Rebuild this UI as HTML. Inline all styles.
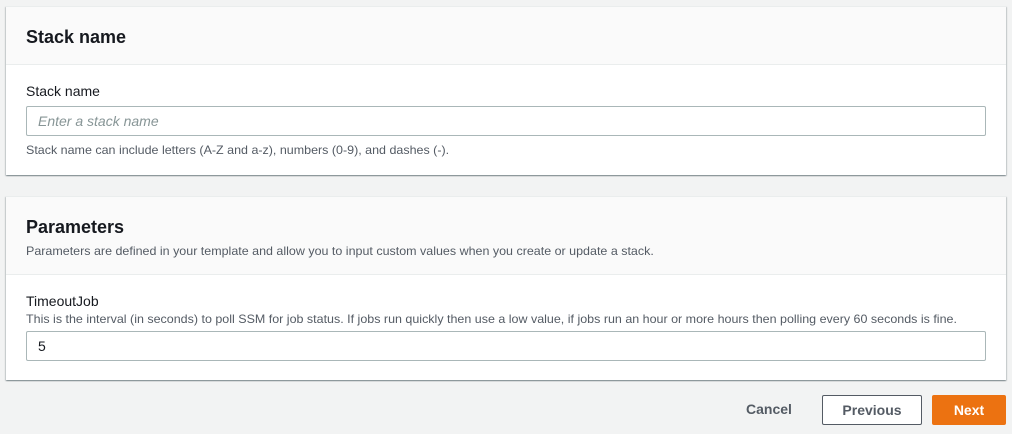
<!DOCTYPE html>
<html><head><style>
body{margin:0;width:1012px;height:434px;background:#f2f3f3;font-family:"Liberation Sans",sans-serif;color:#16191f;position:relative;overflow:hidden}
.p{position:absolute;left:6px;width:1000px;background:#fff;box-shadow:0 1px 1px rgba(0,28,36,.3),1px 1px 1px rgba(0,28,36,.15),-1px 1px 1px rgba(0,28,36,.15);border-top:1px solid #eaeded}
.h{background:#fafafa;border-bottom:1px solid #eaeded;padding:0 20px;box-sizing:border-box}
.h h2{margin:0;font-size:18px;font-weight:bold}
.lbl{position:absolute;left:20px;font-size:14px}
.d{position:absolute;left:20px;font-size:12px;color:#545b64;transform:scaleX(1.04);transform-origin:0 0;white-space:nowrap}
.in{position:absolute;left:20px;width:960px;height:30px;border:1px solid #aab7b8;border-radius:2px;box-sizing:border-box;padding-left:11px;line-height:28px;font-size:14px}
.b{position:absolute;top:395px;height:30px;box-sizing:border-box;font-weight:bold;font-size:14px;text-align:center;line-height:28px;border-radius:2px}
</style></head><body>
<div class="p" style="top:6px;height:168px">
 <div class="h" style="height:58px;padding-top:20px"><h2>Stack name</h2></div>
 <div class="lbl" style="top:76px">Stack name</div>
 <div class="in" style="top:99px;color:#879596;font-style:italic">Enter a stack name</div>
 <div class="d" style="top:136px">Stack name can include letters (A-Z and a-z), numbers (0-9), and dashes (-).</div>
</div>
<div class="p" style="top:196px;height:183px">
 <div class="h" style="height:78px;padding-top:20px"><h2>Parameters</h2><div class="d" style="position:static;margin-top:6px">Parameters are defined in your template and allow you to input custom values when you create or update a stack.</div></div>
 <div class="lbl" style="top:96px">TimeoutJob</div>
 <div class="d" style="top:115px">This is the interval (in seconds) to poll SSM for job status. If jobs run quickly then use a low value, if jobs run an hour or more hours then polling every 60 seconds is fine.</div>
 <div class="in" style="top:134px">5</div>
</div>
<div class="b" style="left:736px;width:66px;color:#545b64">Cancel</div>
<div class="b" style="left:822px;width:100px;border:1px solid #545b64;background:#fff;color:#545b64">Previous</div>
<div class="b" style="left:932px;width:74px;background:#ec7211;color:#fff;border:1px solid #ec7211">Next</div>
</body></html>
